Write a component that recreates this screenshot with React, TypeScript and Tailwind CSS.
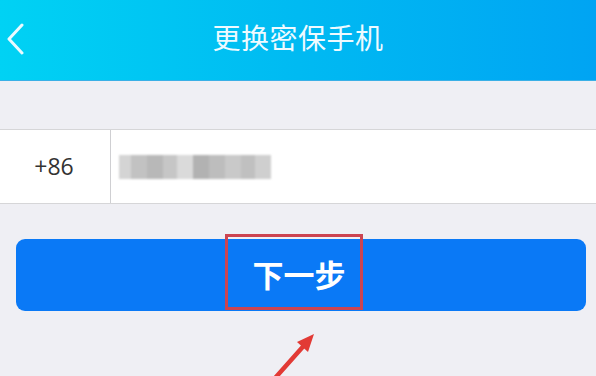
import React from "react";

const blur = [
  { w: 12, c: "#d4d4d4" },
  { w: 16, c: "#c2c2c2" },
  { w: 16, c: "#b8b8b8" },
  { w: 14, c: "#c6c6c6" },
  { w: 16, c: "#dadada" },
  { w: 16, c: "#b2b2b2" },
  { w: 16, c: "#bdbdbd" },
  { w: 16, c: "#c9c9c9" },
  { w: 14, c: "#c0c0c0" },
  { w: 16, c: "#cfcfcf" },
];

export default function App() {
  return (
    <div
      className="relative w-[596px] h-[376px] overflow-hidden bg-[#efeff4]"
      style={{ fontFamily: '"Noto Sans", "Noto Sans CJK SC", sans-serif' }}
    >
      <div className="relative h-[81px] flex items-center justify-center bg-gradient-to-r from-[#00d2f4] via-[#00baf2] to-[#00a4f3] border-b border-[#3ab0e6]">
        <svg
          className="absolute left-[6px] top-[23px]"
          width="20"
          height="32"
          viewBox="0 0 20 32"
          fill="none"
        >
          <path d="M16 2 L3 16 L16 30" stroke="#eafaff" strokeWidth="3" strokeLinecap="round" strokeLinejoin="round" />
        </svg>
        <span className="text-[28px] text-[#eefaff] leading-none tracking-[0.5px] mb-[4px]">更换密保手机</span>
      </div>

      <div className="mt-[48px] h-[75px] bg-white border-y border-[#d6d6d8] flex items-stretch">
        <div className="w-[111px] border-r border-[#cfcfd2] flex items-center justify-center">
          <span className="text-[23px] text-[#333] mr-[2px]" style={{ fontFamily: '"Open Sans", sans-serif' }}>+86</span>
        </div>
        <div className="flex items-center pl-[8px]">
          <div className="flex h-[24px] items-stretch blur-[1px]">
            {blur.map((b, i) => (
              <div key={i} style={{ width: b.w, background: b.c }} />
            ))}
          </div>
        </div>
      </div>

      <div className="relative mt-[35px] ml-[16px] mr-[10px] h-[72px] rounded-[9px] bg-[#0a79f6] flex items-center justify-center">
        <span className="text-[31px] font-bold text-white leading-none mr-[4px]">下一步</span>
        <div className="absolute left-[209px] top-[-5px] w-[138px] h-[76px] border-[3px] border-[#cc4451]" />
      </div>

      <svg className="absolute left-[260px] top-[325px]" width="70" height="51" viewBox="0 0 70 51">
        <path d="M16 52 L48 16" stroke="#e23a35" strokeWidth="4.5" strokeLinecap="round" />
        <path d="M54 9 L37 17 L48 27 Z" fill="#e23a35" />
      </svg>
    </div>
  );
}
